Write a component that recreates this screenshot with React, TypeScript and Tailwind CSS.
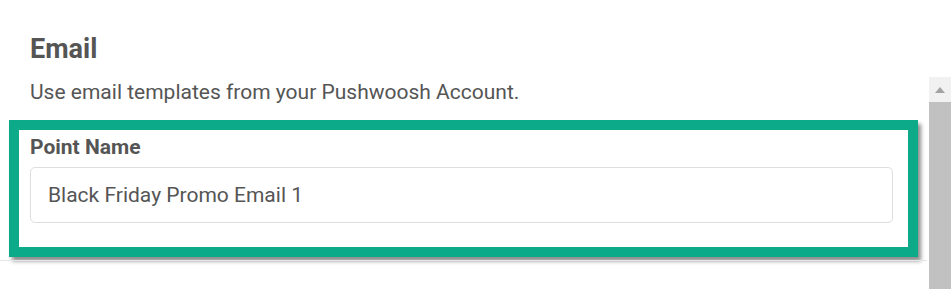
import React from 'react';

const font = { fontFamily: 'Roboto, "Liberation Sans", sans-serif' };

export default function App() {
  return (
    <div className="flex h-[289px] w-[951px] overflow-hidden bg-white text-[#555555]" style={font}>
      {/* Page content */}
      <div className="flex min-w-0 flex-1 flex-col">
        <h2 className="ml-[30px] mt-[32px] text-[27px] font-bold leading-[34px]">Email</h2>
        <p className="ml-[30px] mt-[12px] text-[21px] leading-[28px]">
          Use email templates from your Pushwoosh Account.
        </p>

        {/* Highlighted form block */}
        <div className="ml-[9px] mt-[14px] w-[909px] border-[10px] border-[#0daa8a] bg-white pb-[24px] pl-[11px] pr-[15px] pt-[3px] shadow-[3px_4px_4px_rgba(0,0,0,0.45)]">
          <label className="block text-[21px] font-bold leading-[28px]">Point Name</label>
          <div className="mt-[6px] flex h-[56px] items-center rounded-[5px] border border-[#dedede] px-[17px] pt-[2px] text-[21px]">
            Black Friday Promo Email 1
          </div>
        </div>

        <div className="mt-[3px] h-px w-[927px] bg-[#e6e6e6]" />
      </div>

      {/* Scrollbar */}
      <div className="mt-[77px] flex w-[22px] shrink-0 flex-col bg-[#f1f1f1]">
        <div className="flex h-[25px] items-center justify-center">
          <svg width="10" height="6" viewBox="0 0 10 6">
            <path d="M0 6 L5 0 L10 6 Z" fill="#a3a3a3" />
          </svg>
        </div>
        <div className="flex-1 bg-[#c1c1c1]" />
      </div>
    </div>
  );
}
